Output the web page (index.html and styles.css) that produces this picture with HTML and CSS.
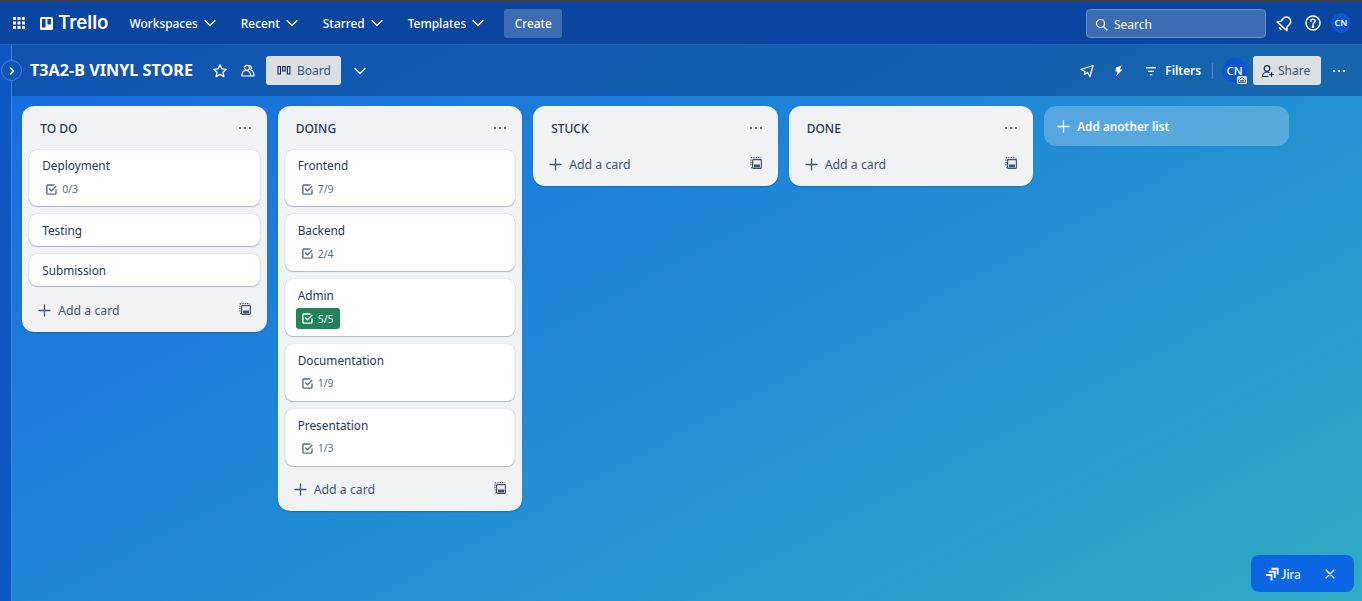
FILE: index.html
```html
<!DOCTYPE html>
<html lang="en">
<head>
    <meta charset="UTF-8">
    <meta name="viewport" content="width=device-width, initial-scale=1.0">
    <title>T3A2-B VINYL STORE | Trello</title>
    <link rel="stylesheet" href="styles.css">
</head>
<body>
    <svg class="icon-defs" width="0" height="0">
        <symbol id="chev" viewBox="0 0 16 16"><path d="M3 5.500l5 5 5-5" fill="none" stroke="currentColor" stroke-width="1.300" stroke-linecap="round" stroke-linejoin="round"/></symbol>
        <symbol id="check" viewBox="0 0 13 13"><path d="M11 6.500v3.800a.8.8 0 0 1-.8.8H2.700a.8.8 0 0 1-.8-.8V2.800a.8.8 0 0 1 .8-.8h6.800" fill="none" stroke="currentColor" stroke-width="1.400"/><path d="M4.200 5.600l2.200 2.200 4.800-4.800" fill="none" stroke="currentColor" stroke-width="1.400"/></symbol>
        <symbol id="plus" viewBox="0 0 13 13"><path d="M6.500 1v11M1 6.500h11" stroke="currentColor" stroke-width="1.300" stroke-linecap="round"/></symbol>
        <symbol id="template" viewBox="0 0 14 14"><path d="M2 9.500V2.500a.8.8 0 0 1 .8-.8h8.400a.8.8 0 0 1 .8.8" fill="none" stroke="currentColor" stroke-width="1.200" stroke-dasharray="1.300 1.100"/><rect x="3.600" y="3.600" width="8.800" height="8.800" rx=".8" fill="none" stroke="currentColor" stroke-width="1.200"/><rect x="5" y="8.500" width="6" height="3" fill="currentColor"/><path d="M2.300 11.700h1" stroke="currentColor" stroke-width="1.200"/></symbol>
        <symbol id="dots" viewBox="0 0 16 16"><circle cx="3" cy="8" r="1.100" fill="currentColor"/><circle cx="8" cy="8" r="1.100" fill="currentColor"/><circle cx="13" cy="8" r="1.100" fill="currentColor"/></symbol>
    </svg>

    <header class="topnav">
        <svg class="apps" width="14" height="14" viewBox="0 0 14 14" fill="#fff">
            <rect x="1" y="1" width="3" height="3"/><rect x="5.500" y="1" width="3" height="3"/><rect x="10" y="1" width="3" height="3"/>
            <rect x="1" y="5.500" width="3" height="3"/><rect x="5.500" y="5.500" width="3" height="3"/><rect x="10" y="5.500" width="3" height="3"/>
            <rect x="1" y="10" width="3" height="3"/><rect x="5.500" y="10" width="3" height="3"/><rect x="10" y="10" width="3" height="3"/>
        </svg>
        <div class="logo">
            <svg width="13" height="13" viewBox="0 0 13 13"><rect width="13" height="13" rx="1.500" fill="#fff"/><rect x="2" y="2" width="3.600" height="8.500" fill="#0a469f"/><rect x="7.400" y="2" width="3.600" height="5.500" fill="#0a469f"/></svg>
            <span>Trello</span>
        </div>
        <nav class="menu">
            <a class="menu-item">Workspaces <svg width="16" height="16"><use href="#chev"/></svg></a>
            <a class="menu-item">Recent <svg width="16" height="16"><use href="#chev"/></svg></a>
            <a class="menu-item">Starred <svg width="16" height="16"><use href="#chev"/></svg></a>
            <a class="menu-item">Templates <svg width="16" height="16"><use href="#chev"/></svg></a>
        </nav>
        <button class="create">Create</button>
        <div class="top-right">
            <div class="search">
                <svg width="13" height="13" viewBox="0 0 13 13" fill="none" stroke="currentColor" stroke-width="1.200"><circle cx="5.500" cy="5.500" r="4"/><path d="M8.500 8.500l3.500 3.500" stroke-linecap="round"/></svg>
                <span>Search</span>
            </div>
            <svg class="bell" width="18" height="18" viewBox="0 0 18 18" fill="none" stroke="#fff" stroke-width="1.600" stroke-linejoin="round" stroke-linecap="round"><g transform="rotate(42 9 9)"><path d="M2.500 13.500h13l-2.300-3V6.800a4.200 4.200 0 0 0-8.400 0v3.700z"/><path d="M8 16.300h2"/></g></svg>
            <svg class="help" width="18" height="18" viewBox="0 0 18 18" fill="none" stroke="#fff" stroke-width="1.500"><circle cx="9" cy="9" r="7"/><path d="M6.800 7.200c0-1.300 1-2 2.200-2s2.200.8 2.200 1.900c0 1.700-2.200 1.600-2.200 3.400" stroke-linecap="round"/><circle cx="9" cy="12.700" r=".6" fill="#fff"/></svg>
            <div class="avatar-small">CN</div>
        </div>
    </header>

    <div class="page">
        <aside class="rail"></aside>
        <button class="rail-toggle">
            <svg width="10" height="10" viewBox="0 0 10 10" fill="none" stroke="#fff" stroke-width="1.600" stroke-linecap="round" stroke-linejoin="round"><path d="M3.500 2l3 3-3 3"/></svg>
        </button>
        <main class="board">
            <div class="board-header">
                <h1>T3A2-B VINYL STORE</h1>
                <svg class="star" width="16" height="16" viewBox="0 0 16 16" fill="none" stroke="#fff" stroke-width="1.300" stroke-linejoin="round"><path d="M8 1.800l1.900 4 4.300.5-3.200 3 .9 4.300L8 11.400l-3.900 2.200.9-4.300-3.200-3 4.300-.5z"/></svg>
                <svg class="people" width="16" height="16" viewBox="0 0 16 16" fill="none" stroke="#fff" stroke-width="1.200" stroke-linejoin="round"><circle cx="7" cy="4.800" r="2.500"/><path d="M9 2.500a2.400 2.400 0 0 1 1.500 4.300c2 .8 3.300 2.700 3.500 5.200v1H2v-1c0-2 1.500-4 3.500-4.700M7.500 8c1.500.3 3 2 3.300 5"/></svg>
                <button class="view-btn">
                    <svg width="14" height="12" viewBox="0 0 14 12" fill="none" stroke="#172b4d" stroke-width="1.100"><rect x="1" y="1.500" width="2.500" height="7.500"/><rect x="5.700" y="1.500" width="2.500" height="4.500"/><rect x="10.400" y="1.500" width="2.500" height="7.500"/></svg>
                    Board
                </button>
                <svg class="view-chev" width="16" height="16"><use href="#chev"/></svg>
                <div class="head-right">
                    <svg width="14" height="14" viewBox="0 0 14 14" fill="none" stroke="#fff" stroke-width="1.300" stroke-linejoin="round"><path d="M1 5.500L13 1.500 10 12.500 7.500 8.500 4.500 10.500 5 7.500z"/></svg>
                    <svg class="bolt" width="12" height="12" viewBox="0 0 12 12" fill="#fff"><path d="M8.500 .5L3 2.500 2.500 6.500h2L3 11.500 9.500 4.500H7z"/></svg>
                    <div class="filters">
                        <svg width="14" height="14" viewBox="0 0 14 14" stroke="#fff" stroke-linecap="butt"><path d="M2 3.700h10" stroke-width="1.500"/><path d="M4 7.300h6" stroke-width="1.300"/><path d="M5.800 10.800h2.400" stroke-width="1.300"/></svg>
                        <span>Filters</span>
                    </div>
                    <span class="divider"></span>
                    <div class="avatar">CN
                        <svg class="avatar-badge" width="10" height="8" viewBox="0 0 10 8"><rect width="10" height="8" rx="1.500" fill="#dcdfe4"/><path d="M1.500 6.500V4L5 1.500 8.500 4v2.500zM3 4.500h4M3 5.800h4" fill="none" stroke="#44546f" stroke-width=".8"/></svg>
                    </div>
                    <button class="share">
                        <svg width="14" height="14" viewBox="0 0 14 14" fill="none" stroke="#172b4d" stroke-width="1.200" stroke-linecap="round"><circle cx="6" cy="4.500" r="2.800"/><path d="M1.500 12.500c0-2.500 2-4.500 4.500-4.500 .8 0 1.500.2 2 .5M1.500 12.500H7M10.500 8.500v4M8.500 10.500h4"/></svg>
                        Share
                    </button>
                    <svg class="head-dots" width="16" height="16"><use href="#dots"/></svg>
                </div>
            </div>

            <div class="lists">
                <section class="list">
                    <div class="list-head"><h2>TO DO</h2><svg width="16" height="16"><use href="#dots"/></svg></div>
                    <div class="cards">
                        <article class="card"><p>Deployment</p><div class="badge"><svg width="13" height="13"><use href="#check"/></svg>0/3</div></article>
                        <article class="card"><p>Testing</p></article>
                        <article class="card"><p>Submission</p></article>
                    </div>
                    <div class="add-card"><svg width="13" height="13"><use href="#plus"/></svg><span>Add a card</span><svg class="tpl" width="14" height="14"><use href="#template"/></svg></div>
                </section>

                <section class="list">
                    <div class="list-head"><h2>DOING</h2><svg width="16" height="16"><use href="#dots"/></svg></div>
                    <div class="cards">
                        <article class="card"><p>Frontend</p><div class="badge"><svg width="13" height="13"><use href="#check"/></svg>7/9</div></article>
                        <article class="card"><p>Backend</p><div class="badge"><svg width="13" height="13"><use href="#check"/></svg>2/4</div></article>
                        <article class="card"><p>Admin</p><div class="badge done"><svg width="13" height="13"><use href="#check"/></svg>5/5</div></article>
                        <article class="card"><p>Documentation</p><div class="badge"><svg width="13" height="13"><use href="#check"/></svg>1/9</div></article>
                        <article class="card"><p>Presentation</p><div class="badge"><svg width="13" height="13"><use href="#check"/></svg>1/3</div></article>
                    </div>
                    <div class="add-card"><svg width="13" height="13"><use href="#plus"/></svg><span>Add a card</span><svg class="tpl" width="14" height="14"><use href="#template"/></svg></div>
                </section>

                <section class="list">
                    <div class="list-head"><h2>STUCK</h2><svg width="16" height="16"><use href="#dots"/></svg></div>
                    <div class="add-card"><svg width="13" height="13"><use href="#plus"/></svg><span>Add a card</span><svg class="tpl" width="14" height="14"><use href="#template"/></svg></div>
                </section>

                <section class="list">
                    <div class="list-head"><h2>DONE</h2><svg width="16" height="16"><use href="#dots"/></svg></div>
                    <div class="add-card"><svg width="13" height="13"><use href="#plus"/></svg><span>Add a card</span><svg class="tpl" width="14" height="14"><use href="#template"/></svg></div>
                </section>

                <button class="add-list"><svg width="13" height="13"><use href="#plus"/></svg>Add another list</button>
            </div>
        </main>
    </div>

    <div class="jira">
        <svg width="14" height="14" viewBox="0 0 14 14" fill="none" stroke="#fff" stroke-width="1.900"><path d="M6.500 1.800h6.200v5.700"/><path d="M3.800 4.800h6v6"/><path d="M1 8h5.500v5.500"/></svg>
        <span>Jira</span>
        <svg class="jira-x" width="10" height="10" viewBox="0 0 10 10" stroke="#fff" stroke-width="1.200" stroke-linecap="round"><path d="M1 1l8 8M9 1l-8 8"/></svg>
    </div>
</body>
</html>
```

FILE: styles.css
```css
* { box-sizing: border-box; }
html, body { height: 100%; }
body {
    margin: 0;
    overflow: hidden;
    font-family: "Noto Sans", "Open Sans", sans-serif;
    font-size: 13px;
    color: #172b4d;
    background: linear-gradient(152deg, #1668dd 0%, #1f86d8 45%, #30acc4 100%);
    border-top: 2px solid #3b3f4a;
}
.icon-defs { position: absolute; }

/* top bar */
.topnav {
    height: 43px;
    display: flex;
    align-items: center;
    padding-left: 12px;
    background: #0a469f;
    border-bottom: 1px solid #2c63b0;
    color: #fff;
}
.logo { display: flex; align-items: center; gap: 5px; margin-left: 14px; }
.logo span { font-family: "Inter", sans-serif; font-size: 18.700px; font-weight: 600; line-height: 20px; }
.menu { display: flex; margin-left: 21px; gap: 23px; }
.menu-item { display: flex; align-items: center; gap: 4px; font-size: 11.900px; font-weight: 500; }
.create {
    width: 58px;
    height: 29px;
    margin-left: 18px;
    border: 0;
    border-radius: 3px;
    background: #3c6cb1;
    color: #fff;
    font: 500 11.800px "Noto Sans", sans-serif;
}
.top-right { margin-left: auto; display: flex; align-items: center; padding-right: 11px; }
.search {
    width: 180px;
    height: 29px;
    display: flex;
    align-items: center;
    gap: 6px;
    padding: 2px 0 0 8px;
    background: #3c6cb1;
    border: 1px solid #6a8fc5;
    border-radius: 4px;
    font-size: 12px;
}
.bell { margin-left: 10px; }
.help { margin-left: 10px; }
.avatar-small {
    width: 20px;
    height: 20px;
    margin-left: 9px;
    border-radius: 50%;
    background: #0c55d0;
    font-size: 9px;
    font-weight: 600;
    line-height: 20px;
    text-align: center;
}

/* board */
.page { display: flex; height: calc(100% - 43px); position: relative; }
.rail { width: 12px; flex: none; background: #0e56c0; border-right: 1px solid #3f83e4; }
.rail-toggle {
    position: absolute;
    left: 1px;
    top: 15px;
    width: 21px;
    height: 21px;
    padding: 0;
    display: flex;
    align-items: center;
    justify-content: center;
    border-radius: 50%;
    border: 1px solid #3f83e4;
    background: #0e56b8;
}
.board { flex: 1; min-width: 0; }
.board-header {
    height: 51px;
    display: flex;
    align-items: center;
    padding-left: 18px;
    background: rgba(9, 56, 130, .48);
    color: #fff;
}
.board-header h1 { margin: 0; padding-bottom: 2px; font-size: 16.200px; font-weight: 700; }
.star { margin-left: 19px; }
.people { margin-left: 12px; }
.view-btn {
    display: flex;
    align-items: center;
    gap: 6px;
    width: 75px;
    height: 29px;
    margin-left: 10px;
    padding-left: 11px;
    border: 0;
    border-radius: 3px;
    background: #dcdfe4;
    color: #44546f;
    font: 12px "Noto Sans", sans-serif;
}
.view-chev { margin-left: 11px; }
.head-right { margin-left: auto; display: flex; align-items: center; padding-right: 15px; }
.bolt { margin-left: 19px; }
.filters { display: flex; align-items: center; gap: 7px; margin-left: 19px; font-size: 11.800px; font-weight: 600; }
.filters span { padding-bottom: 1px; }
.divider { width: 1px; height: 16px; margin: 0 9px 0 11px; background: #5c8cb8; }
.avatar {
    position: relative;
    width: 25px;
    height: 25px;
    border-radius: 50%;
    background: #0c55d0;
    font-size: 11.500px;
    font-weight: 500;
    line-height: 25px;
    text-align: center;
}
.avatar-badge { position: absolute; right: 0; bottom: -1px; }
.share {
    display: flex;
    align-items: center;
    gap: 3px;
    width: 68px;
    height: 29px;
    margin-left: 6px;
    padding-left: 8px;
    border: 0;
    border-radius: 3px;
    background: #dcdfe4;
    color: #44546f;
    font: 12px "Noto Sans", sans-serif;
}
.head-dots { margin-left: 10px; }

/* lists */
.lists { display: flex; align-items: flex-start; gap: 10.900px; padding: 10px 0 0 10.200px; }
.list { width: 244.600px; flex: none; padding: 0 7px 2px; background: #f1f2f4; border-radius: 12px; box-shadow: 0 1px 1px #091e4240; }
.list-head { height: 37.600px; display: flex; align-items: center; justify-content: space-between; padding: 7px 7px 0 11px; color: #44546f; }
.list h2 { margin: 0; font-size: 12px; font-weight: 500; color: #253858; }
.cards { display: flex; flex-direction: column; gap: 8px; margin: 6px 0 3.400px; }
.card { background: #fff; border-radius: 8px; padding: 6.900px 13px 0; min-height: 32px; box-shadow: 0 1px 1px #091e4240, 0 0 1px #091e424f; }
.card p { margin: 0; font-size: 11.800px; line-height: 19px; color: #253858; }
.card:has(.badge) { height: 56.800px; }
.badge { display: inline-flex; align-items: center; gap: 4px; height: 21px; margin: 3.100px 0 0 -2px; padding: 0 6px 0 5px; font-size: 10.500px; color: #5e6c84; border-radius: 3px; }
.badge.done { background: #1f845a; color: #fff; }
.add-card { height: 40px; display: flex; align-items: center; padding: 1px 9px 0; font-size: 12.300px; color: #44546f; }
.add-card span { margin-left: 7px; }
.tpl { margin: -2px -1px 0 auto; }
.add-list {
    width: 245px;
    height: 40px;
    display: flex;
    align-items: center;
    gap: 7px;
    padding: 0 13px;
    border: 0;
    border-radius: 12px;
    background: rgba(255, 255, 255, .24);
    color: #fff;
    font: 600 11.800px "Noto Sans", sans-serif;
}

/* jira prompt */
.jira {
    position: fixed;
    right: 8px;
    bottom: 9px;
    width: 103px;
    height: 37px;
    display: flex;
    align-items: center;
    gap: 2px;
    padding-left: 14px;
    border-radius: 8px;
    background: #0c66e4;
    color: #fff;
    font-family: "Lato", sans-serif;
    font-size: 13px;
}
.jira-x { margin-left: auto; margin-right: 19px; }
```
